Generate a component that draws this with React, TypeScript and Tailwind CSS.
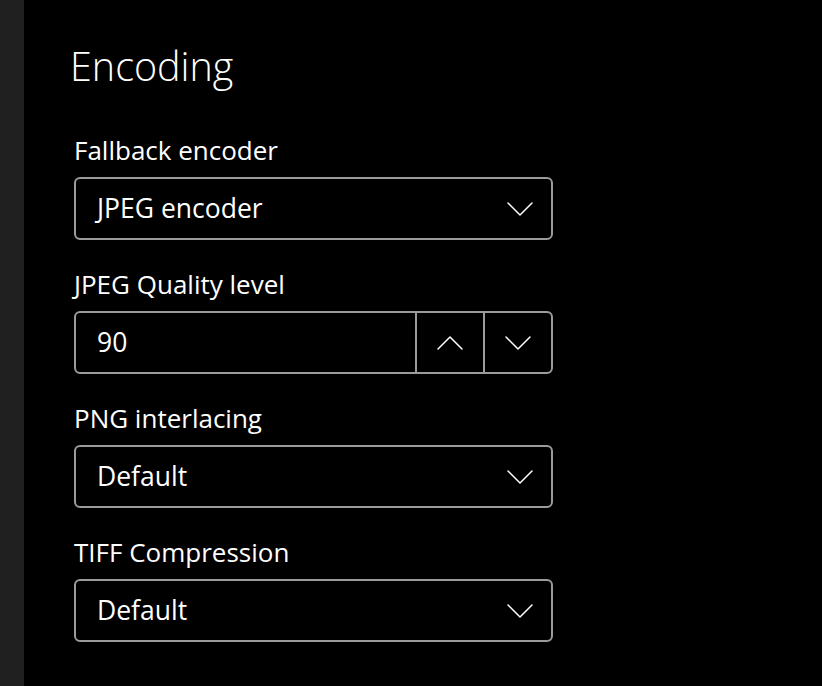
import { ReactNode } from 'react';

const font = { fontFamily: '"Open Sans", "Noto Sans", sans-serif' };

const Chevron = ({ up = false }: { up?: boolean }) => (
    <svg width="26" height="14" viewBox="0 0 26 14" fill="none">
        <path
            d={up ? 'M1 13 L13 1 L25 13' : 'M1 1 L13 13 L25 1'}
            stroke="white"
            strokeWidth="1.5"
            strokeLinecap="round"
            strokeLinejoin="round"
        />
    </svg>
);

const Field = ({ label, children }: { label: string; children: ReactNode }) => (
    <div className="flex flex-col">
        <span className="text-[26px] leading-[34px] text-white">{label}</span>
        <div className="mt-[10px]">{children}</div>
    </div>
);

const Dropdown = ({ value }: { value: string }) => (
    <div className="w-[479px] h-[63px] rounded-[6px] border-2 border-[#9b9b9b] flex items-center justify-between pl-[21px] pr-[18px]">
        <span className="text-[26.5px] text-white">{value}</span>
        <Chevron />
    </div>
);

const NumberBox = ({ value }: { value: string }) => (
    <div className="w-[479px] h-[63px] rounded-[6px] border-2 border-[#9b9b9b] flex items-stretch">
        <div className="flex-1 flex items-center pl-[21px]">
            <span className="text-[26.5px] text-white">{value}</span>
        </div>
        <div className="w-[68px] border-l-2 border-[#9b9b9b] flex items-center justify-center">
            <Chevron up />
        </div>
        <div className="w-[68px] border-l-2 border-[#9b9b9b] flex items-center justify-center">
            <Chevron />
        </div>
    </div>
);

const App = () => {
    return (
        <div className="w-[822px] h-[686px] flex bg-black overflow-hidden" style={font}>
            <div className="w-[24px] h-full bg-[#202020]" />
            <div className="flex-1 pl-[46px] pt-[38px]">
                <h1 className="text-[39.5px] leading-[56px] font-light text-white">Encoding</h1>
                <div className="flex flex-col gap-[27px] mt-[39px] pl-[4px]">
                    <Field label="Fallback encoder">
                        <Dropdown value="JPEG encoder" />
                    </Field>
                    <Field label="JPEG Quality level">
                        <NumberBox value="90" />
                    </Field>
                    <Field label="PNG interlacing">
                        <Dropdown value="Default" />
                    </Field>
                    <Field label="TIFF Compression">
                        <Dropdown value="Default" />
                    </Field>
                </div>
            </div>
        </div>
    );
};

export default App;
